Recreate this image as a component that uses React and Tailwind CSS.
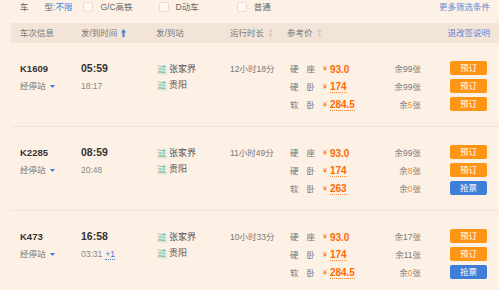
import React from "react";

const trains = [
  {
    no: "K1609", dep: "05:59", arr: "18:17", plus: false, dur: "12小时18分",
    seats: [
      { a: "硬", b: "座", price: "93.0", ul: false, pre: "余", num: "99", hot: false, btn: "预订" },
      { a: "硬", b: "卧", price: "174", ul: true, pre: "余", num: "99", hot: false, btn: "预订" },
      { a: "软", b: "卧", price: "284.5", ul: true, pre: "余", num: "5", hot: true, btn: "预订" },
    ],
  },
  {
    no: "K2285", dep: "08:59", arr: "20:48", plus: false, dur: "11小时49分",
    seats: [
      { a: "硬", b: "座", price: "93.0", ul: false, pre: "余", num: "99", hot: false, btn: "预订" },
      { a: "硬", b: "卧", price: "174", ul: true, pre: "余", num: "8", hot: true, btn: "预订" },
      { a: "软", b: "卧", price: "263", ul: true, pre: "余", num: "0", hot: true, btn: "抢票" },
    ],
  },
  {
    no: "K473", dep: "16:58", arr: "03:31", plus: true, dur: "10小时33分",
    seats: [
      { a: "硬", b: "座", price: "93.0", ul: false, pre: "余", num: "17", hot: false, btn: "预订" },
      { a: "硬", b: "卧", price: "174", ul: true, pre: "余", num: "11", hot: false, btn: "预订" },
      { a: "软", b: "卧", price: "284.5", ul: true, pre: "余", num: "0", hot: true, btn: "抢票" },
    ],
  },
];

function Check() {
  return <span className="inline-block w-[10px] h-[10px] rounded-[2px] border border-[#eadccf] bg-[#fff7f0] mr-[7px]" />;
}

function SortGrey() {
  return (
    <svg width="5" height="8" viewBox="0 0 5 8" className="ml-[4px]">
      <path d="M2.5 0 L5 2.5 H0 Z" fill="#d9c8b8" />
      <rect x="2" y="2" width="1" height="4" fill="#d9c8b8" />
      <path d="M2.5 8 L5 5.5 H0 Z" fill="#d9c8b8" />
    </svg>
  );
}

function SortBlue() {
  return (
    <svg width="5" height="8" viewBox="0 0 5 8" className="ml-[4px]">
      <path d="M2.5 0 L5 3.5 H0 Z" fill="#3b7ddb" />
      <rect x="1.5" y="3" width="2" height="5" fill="#3b7ddb" />
    </svg>
  );
}

function Guo() {
  return (
    <span className="inline-flex items-center justify-center w-[10px] h-[10px] bg-[#e9e8df] text-[#4fb04f] text-[7.5px] leading-none mr-[2px]">过</span>
  );
}

function Row({ t, first }) {
  return (
    <div className={`flex ml-[11px] pl-[9px] pt-[16px] pb-[13px] ${first ? "" : "border-t border-[#f3e1d3]"}`}>
      <div className="w-[61px] flex flex-col">
        <div className="h-[18px] flex items-center pt-[3px] text-[9.5px] font-bold text-[#333]">{t.no}</div>
        <div className="h-[18px] flex items-center text-[8.5px] text-[#777]">
          经停站
          <svg width="5" height="3" viewBox="0 0 5 3" className="ml-[4px] mt-[1px]">
            <path d="M0 0 H5 L2.5 3 Z" fill="#3b7ddb" />
          </svg>
        </div>
      </div>
      <div className="w-[76px] flex flex-col">
        <div className="h-[18px] flex items-center pt-[2px] text-[10.5px] font-bold text-[#333]">{t.dep}</div>
        <div className="h-[18px] flex items-center text-[8.5px] text-[#888]">
          {t.arr}
          {t.plus && (
            <span className="ml-[3px] text-[#3b7ddb] border-b border-dotted border-[#3b7ddb] leading-[10px]">+1</span>
          )}
        </div>
      </div>
      <div className="w-[73px] flex flex-col">
        <div className="h-[18px] flex items-center pt-[3px] text-[9px] text-[#555]"><Guo />张家界</div>
        <div className="h-[18px] flex items-center text-[9px] text-[#555]"><Guo />贵阳</div>
      </div>
      <div className="w-[60px] flex flex-col">
        <div className="h-[18px] flex items-center pt-[3px] text-[8.5px] text-[#777]">{t.dur}</div>
      </div>
      <div className="flex flex-col">
        {t.seats.map((s, i) => (
          <div key={i} className="h-[18px] flex items-center">
            <div className="w-[33px] flex text-[8.5px] text-[#777] pt-[2px]">
              <span>{s.a}</span>
              <span className="ml-[8px]">{s.b}</span>
            </div>
            <div className="w-[60px] flex items-center pt-[2px] text-[#ff6a00]">
              <span className="text-[7px] mr-[3px]">¥</span>
              <span className={`text-[10px] font-bold leading-[11px] ${s.ul ? "border-b border-dotted border-[#ff8a3d]" : ""}`}>{s.price}</span>
            </div>
            <div className="w-[38px] flex justify-end pt-[2px] text-[8.5px] text-[#777]">
              {s.pre}
              <span className={s.hot ? "text-[#ff8a2a]" : ""}>{s.num}</span>张
            </div>
            <div className="w-[29px]" />
            <div
              className={`w-[37px] h-[14px] rounded-[2px] flex items-center justify-center text-[8.5px] text-white ${
                s.btn === "抢票" ? "bg-[#3d7fd6]" : "bg-[#ff9514]"
              }`}
            >
              {s.btn}
            </div>
          </div>
        ))}
      </div>
    </div>
  );
}

export default function App() {
  return (
    <div className="w-[499px] h-[290px] overflow-hidden bg-[#fdf1e6] font-['Liberation_Sans','Noto_Sans_CJK_SC',sans-serif]">
      <div className="h-[14px] flex items-center pl-[20px] pr-[9px] text-[8.5px] text-[#666]">
        <span>车</span>
        <span className="ml-[16px]">型</span>
        <span>:</span>
        <span className="text-[#3b7ddb]">不限</span>
        <div className="ml-[11px] flex items-center"><Check />G/C高铁</div>
        <div className="ml-[26px] flex items-center"><Check />D动车</div>
        <div className="ml-[38px] flex items-center"><Check />普通</div>
        <span className="ml-auto text-[#5a8ad8]">更多筛选条件</span>
      </div>
      <div className="mt-[9px] ml-[11px] h-[20px] bg-[#f2e5d8] flex items-center pl-[9px] pr-[9px] text-[8.5px] text-[#777]">
        <span className="w-[61px]">车次信息</span>
        <span className="w-[75px] flex items-center">发/到时间<SortBlue /></span>
        <span className="w-[74px]">发/到站</span>
        <span className="w-[57px] flex items-center">运行时长<SortGrey /></span>
        <span className="flex items-center">参考价<SortGrey /></span>
        <span className="ml-auto text-[#5a8ad8]">退改签说明</span>
      </div>
      {trains.map((t, i) => (
        <Row key={t.no} t={t} first={i === 0} />
      ))}
    </div>
  );
}
